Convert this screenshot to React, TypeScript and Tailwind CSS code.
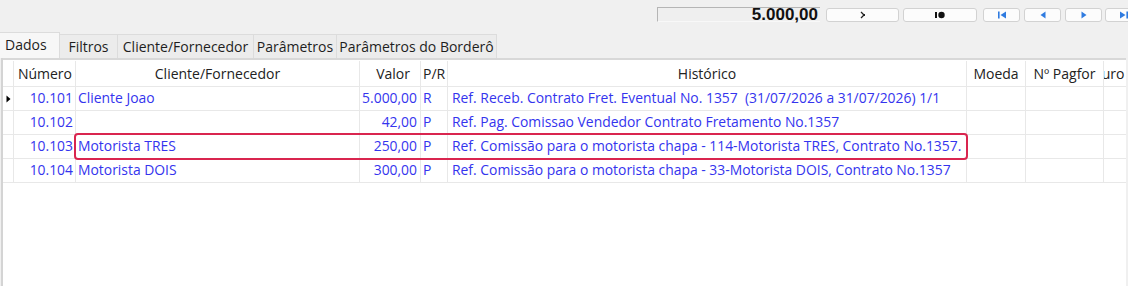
import React from "react";

const F = { fontFamily: '"Open Sans", "Noto Sans", sans-serif' };

const cols = "grid-cols-[11px_62px_284px_61px_27px_519px_59px_78px_22px]";

type Row = { n: string; c: string; v: string; pr: string; h: string; active?: boolean };
const rows: Row[] = [
  { n: "10.101", c: "Cliente Joao", v: "5.000,00", pr: "R", h: "Ref. Receb. Contrato Fret. Eventual No. 1357  (31/07/2026 a 31/07/2026) 1/1", active: true },
  { n: "10.102", c: "", v: "42,00", pr: "P", h: "Ref. Pag. Comissao Vendedor Contrato Fretamento No.1357" },
  { n: "10.103", c: "Motorista TRES", v: "250,00", pr: "P", h: "Ref. Comissão para o motorista chapa - 114-Motorista TRES, Contrato No.1357." },
  { n: "10.104", c: "Motorista DOIS", v: "300,00", pr: "P", h: "Ref. Comissão para o motorista chapa - 33-Motorista DOIS, Contrato No.1357" },
];

function Btn({ w, children, className = "" }: { w: string; children?: React.ReactNode; className?: string }) {
  return (
    <div className={`${w} h-[14px] bg-[#fcfcfc] border border-[#d2d2d2] rounded-[3px] flex items-center justify-center shrink-0 ${className}`}>
      {children}
    </div>
  );
}

const cell = "border-r border-b border-[#e8e8e8] overflow-hidden whitespace-nowrap flex items-center";

export default function App() {
  return (
    <div className="w-[1128px] h-[286px] bg-[#f0f0f0] overflow-hidden relative" style={F}>
      {/* toolbar */}
      <div className="h-[31px] flex justify-end items-start pt-[7px] overflow-hidden">
        <div className="w-[163px] h-[15px] bg-[#efefef] border-t border-l border-[#b5b5b5] border-b border-b-[#f8f8f8] flex items-center justify-end pr-[2px]">
          <span className="text-[17px] font-bold text-[#111] leading-none" style={{ fontFamily: '"Liberation Sans", Arial, sans-serif' }}>5.000,00</span>
        </div>
        <Btn w="w-[73px] ml-[6px] mt-[1px]">
          <svg width="8" height="8" viewBox="0 0 8 8">
            <path d="M2 1 L5 4 L2 7" fill="none" stroke="#222" strokeWidth="1.3" />
            <rect x="4" y="3" width="2" height="2" fill="#222" />
          </svg>
        </Btn>
        <Btn w="w-[74px] ml-[4px] mt-[1px]">
          <svg width="12" height="8" viewBox="0 0 12 8">
            <rect x="1" y="1" width="2" height="6" fill="#111" />
            <circle cx="7.5" cy="4" r="3.2" fill="#111" />
          </svg>
        </Btn>
        <Btn w="w-[37px] ml-[6px] mt-[1px]">
          <svg width="10" height="8" viewBox="0 0 10 8">
            <rect x="1" y="0.5" width="1.6" height="7" fill="#2f7be0" />
            <path d="M9 0.5 L3.5 4 L9 7.5 Z" fill="#2f7be0" />
          </svg>
        </Btn>
        <Btn w="w-[37px] ml-[4px] mt-[1px]">
          <svg width="8" height="8" viewBox="0 0 8 8">
            <path d="M6.5 0.5 L1.5 4 L6.5 7.5 Z" fill="#2f7be0" />
          </svg>
        </Btn>
        <Btn w="w-[37px] ml-[4px] mt-[1px]">
          <svg width="8" height="8" viewBox="0 0 8 8">
            <path d="M1.5 0.5 L6.5 4 L1.5 7.5 Z" fill="#2f7be0" />
          </svg>
        </Btn>
        <Btn w="w-[37px] ml-[3px] mt-[1px] -mr-[14px]">
          <svg width="10" height="8" viewBox="0 0 10 8">
            <path d="M1 0.5 L6.5 4 L1 7.5 Z" fill="#2f7be0" />
            <rect x="7.4" y="0.5" width="1.6" height="7" fill="#2f7be0" />
          </svg>
        </Btn>
      </div>

      {/* tabs */}
      <div className="h-[27px] flex items-end text-[14px] text-[#1e1e1e]">
        <div className="w-[60px] h-[26px] bg-[#f7f7f7] border-t border-r border-[#dcdcdc] flex items-center pl-[5px] pb-[2px]">Dados</div>
        <div className="w-[58px] h-[24px] bg-[#ececec] border-t border-r border-[#dcdcdc] flex items-center justify-center">Filtros</div>
        <div className="w-[136px] h-[24px] bg-[#ececec] border-t border-r border-[#dcdcdc] flex items-center justify-center">Cliente/Fornecedor</div>
        <div className="w-[83px] h-[24px] bg-[#ececec] border-t border-r border-[#dcdcdc] flex items-center justify-center">Parâmetros</div>
        <div className="w-[160px] h-[24px] bg-[#ececec] border-t border-r border-[#dcdcdc] flex items-center justify-center">Parâmetros do Borderô</div>
      </div>

      {/* tab page */}
      <div className="h-[228px] flex">
        <div className="w-[1px] bg-[#f0f0f0]" />
        <div className="w-[2px] bg-[#d4d4d4]" />
        <div className="w-[1123px] bg-white border-t-2 border-[#d8d8d8] pt-[1px] text-[13.9px]">
          <div className={`grid ${cols} h-[26px] text-[#222] text-[14px]`}>
            <div className={cell} />
            <div className={`${cell} justify-end pr-[3px]`}>Número</div>
            <div className={`${cell} justify-center`}>Cliente/Fornecedor</div>
            <div className={`${cell} justify-end pr-[10px]`}>Valor</div>
            <div className={`${cell} pl-[2px]`}>P/R</div>
            <div className={`${cell} justify-center`}>Histórico</div>
            <div className={`${cell} justify-center`}>Moeda</div>
            <div className={`${cell} justify-center`}>Nº Pagfor</div>
            <div className={`${cell} border-r-0`}><span className="-ml-[6px]">Juro</span></div>
          </div>
          {rows.map((r) => (
            <div key={r.n} className={`grid ${cols} h-[24px] text-[#3434ee]`}>
              <div className={`${cell} justify-center`}>
                {r.active && (
                  <svg width="5" height="8" viewBox="0 0 5 8">
                    <path d="M0.5 0.5 L4.5 4 L0.5 7.5 Z" fill="#000" />
                  </svg>
                )}
              </div>
              <div className={`${cell} justify-end pr-[2px]`}>{r.n}</div>
              <div className={`${cell} pl-[2px]`}>{r.c}</div>
              <div className={`${cell} justify-end pr-[3px]`}>{r.v}</div>
              <div className={`${cell} pl-[2px]`}>{r.pr}</div>
              <div className={`${cell} pl-[4px] whitespace-pre`}>{r.h}</div>
              <div className={cell} />
              <div className={cell} />
              <div className={`${cell} border-r-0`} />
            </div>
          ))}
        </div>
        <div className="w-[2px] bg-[#f0f0f0]" />
      </div>

      {/* highlight annotation */}
      <div className="absolute left-[74px] top-[133px] w-[894px] h-[27px] border-2 border-[#d9254f] rounded-[4px] pointer-events-none" />
    </div>
  );
}
